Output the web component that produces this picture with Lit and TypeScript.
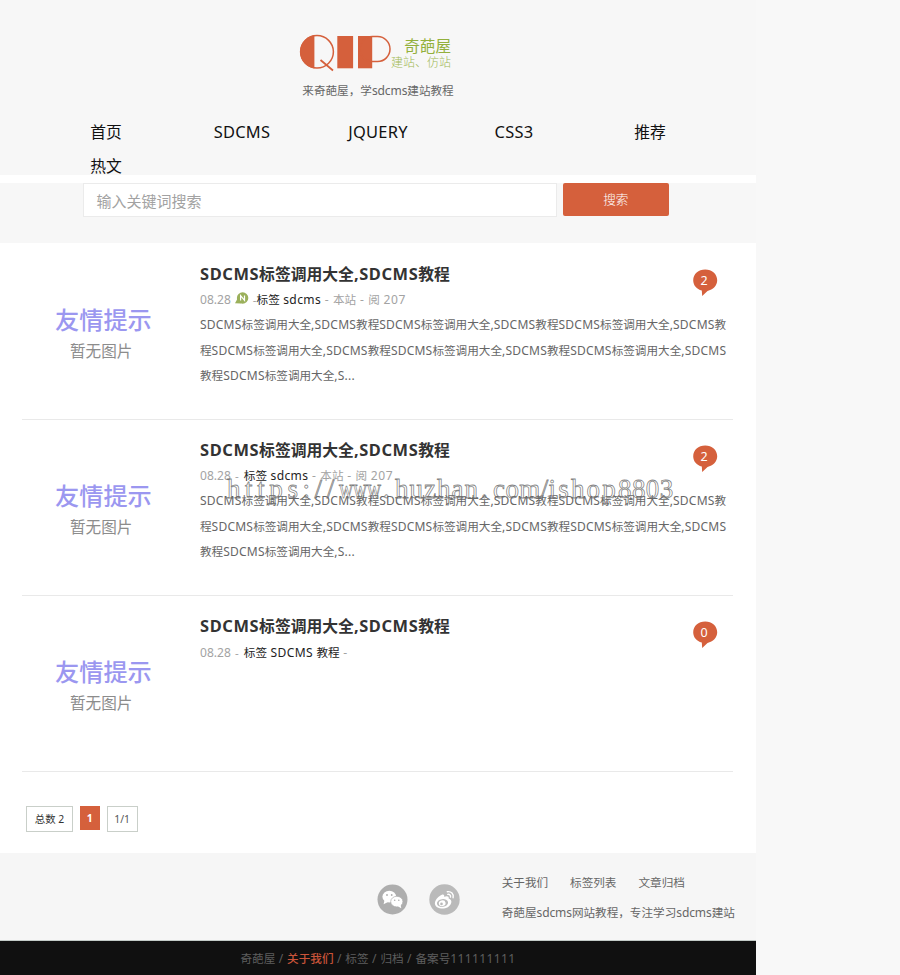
import { LitElement, html, css, svg } from "lit";
import { customElement } from "lit/decorators.js";

/** Wraps runs of Latin text so they can be tracked apart from the Han text. */
const mix = (text: string) =>
  text
    .split(/([\x20-\x7e]+)/)
    .filter((part) => part)
    .map((part) => (/^[\x20-\x7e]/.test(part) ? html`<span class="lat">${part}</span>` : part));

interface Article {
  fresh?: boolean;
  tag: string;
  tail: string;
  lines: string[];
  comments: number;
}

const EXCERPT = [
  "SDCMS标签调用大全,SDCMS教程SDCMS标签调用大全,SDCMS教程SDCMS标签调用大全,SDCMS教",
  "程SDCMS标签调用大全,SDCMS教程SDCMS标签调用大全,SDCMS教程SDCMS标签调用大全,SDCMS",
  "教程SDCMS标签调用大全,S...",
];

const ARTICLES: Article[] = [
  { fresh: true, tag: "标签 sdcms", tail: " - 本站 - 阅 207", lines: EXCERPT, comments: 2 },
  { tag: "标签 sdcms", tail: " - 本站 - 阅 207", lines: EXCERPT, comments: 2 },
  { tag: "标签 SDCMS 教程", tail: " -", lines: [], comments: 0 },
];

const NAV = ["首页", "SDCMS", "JQUERY", "CSS3", "推荐", "热文"];

@customElement("app-root")
export class AppRoot extends LitElement {
  static styles = css`
    :host {
      display: block;
      height: 975px;
      overflow: hidden;
      background: #f8f8f8;
      font-family: "Noto Sans", "Noto Sans CJK SC", sans-serif;
      font-size: 11.6px;
      color: #666;
    }
    * { box-sizing: border-box; }
    .lat { font-size: 1.04em; letter-spacing: 0.016em; white-space: pre; }
    .page { width: 756px; position: relative; background: #fff; }
    .header { height: 175px; background: #f7f7f7; padding-top: 32px; }
    .brand { display: flex; width: 153px; height: 42px; margin-left: 298px; }
    .brand svg { flex: none; }
    .brand-names {
      flex: 1; min-width: 0; display: flex; flex-direction: column; align-items: flex-end;
      white-space: nowrap; padding-top: 4px;
    }
    .name { font-size: 15.6px; line-height: 20px; color: #93b03c; }
    .trade { font-size: 12px; line-height: 13px; color: #9fb955; font-weight: 300; }
    .slogan { text-align: center; line-height: 20px; margin-top: 7px; font-size: 11.6px; white-space: nowrap; }
    .slogan .lat { letter-spacing: -0.01em; }
    .nav {
      display: grid; grid-template-columns: repeat(5, 136px); grid-auto-rows: 34px;
      margin: 14px 0 0 38px; text-align: center; line-height: 34px; font-size: 15.8px; color: #111;
    }
    .search { height: 60px; margin-top: 8px; background: #f7f7f7; padding-left: 83px; display: flex; gap: 6px; }
    .field {
      width: 473.5px; height: 34px; background: #fff; border: 1px solid #ebebeb;
      padding-left: 12.5px; line-height: 35px; font-size: 15px; color: #a2a2a2;
    }
    .go {
      width: 106.5px; height: 33px; border-radius: 2px; background: #d5603c;
      color: #fff; text-align: center; line-height: 33px; font-size: 12.6px; font-weight: 300;
    }
    .list { margin: 0 23px 0 22px; padding-top: 0.6px; }
    .item { height: 176.1px; border-bottom: 1px solid #e9e9e9; display: flex; }
    .thumb { width: 178px; padding: 58px 0 0 33px; white-space: nowrap; }
    .thumb-main { font-size: 24.2px; line-height: 36px; color: #9b97f0; font-weight: 500; }
    .thumb-sub { font-size: 15.6px; line-height: 26px; color: #8c8c8c; padding-left: 15px; }
    .body { flex: 1; padding-top: 18.3px; white-space: nowrap; min-width: 0; }
    .title { font-size: 15.8px; line-height: 24px; font-weight: 700; color: #333; }
    .title .lat { letter-spacing: 0.036em; }
    .meta { line-height: 26px; height: 26px; margin-top: 1.5px; color: #a3a3a3; display: flex; align-items: center; }
    .meta .lat { letter-spacing: 0.03em; }
    .meta .date .lat { letter-spacing: 0; }
    .meta .tail .lat { letter-spacing: 0.05em; }
    .tag { color: #222; }
    .fresh { width: 14px; height: 13px; margin: -4px 4px 0 4px; }
    .gap { white-space: pre; letter-spacing: 1.1px; }
    .lines { line-height: 25.7px; margin-top: -1.5px; }
    .bubble { width: 25px; height: 28px; margin: 25px 15.5px 0 -40.5px; position: relative; flex: none; }
    .bubble svg { display: block; }
    .count {
      position: absolute; left: 0; top: 0; width: 23px; line-height: 23px;
      color: #fff; font-size: 12.5px; text-align: center;
    }
    .pager { display: flex; padding: 34.5px 0 0 26px; height: 81.1px; gap: 6.6px; font-size: 10.4px; color: #333; }
    .box { height: 26px; line-height: 24px; border: 1px solid #c9cfc9; text-align: center; white-space: nowrap; }
    .total { width: 47px; }
    .ratio { width: 31px; color: #555; }
    .current { width: 20.5px; height: 24px; line-height: 24px; background: #d5603c; color: #fff; font-weight: 700; text-align: center; }
    .footer { height: 88px; background: #f6f6f6; border-bottom: 1px solid #c3cbc7; display: flex; padding-left: 377px; }
    .social { display: flex; gap: 21px; padding-top: 31px; width: 124.7px; }
    .links { display: flex; gap: 22px; line-height: 30px; padding-top: 15px; }
    .about { line-height: 30px; white-space: nowrap; }
    .about .lat { letter-spacing: -0.01em; }
    .legal { height: 35px; background: #101010; color: #5e5e5e; text-align: center; line-height: 36px; white-space: nowrap; }
    .legal .lat { letter-spacing: 0.03em; }
    .hot { color: #c9543a; font-weight: 500; }
    .mark {
      position: absolute; left: 227px; top: 472px; display: flex; white-space: nowrap;
      font: 27px/34px "Liberation Serif", serif; color: transparent;
      -webkit-text-stroke: 0.8px rgba(110, 110, 110, 0.85); pointer-events: none;
    }
    .m1 { letter-spacing: 4.6px; width: 112px; }
    .m2 { width: 42px; transform: scaleX(0.72); transform-origin: left; }
    .m3 { width: 14px; padding-left: 2px; }
    .m4 { width: 84px; letter-spacing: 1px; }
    .m5 { width: 55.5px; letter-spacing: 0.4px; }
    .m6 { width: 69.5px; letter-spacing: 2.2px; }
  `;

  private logo() {
    return html`<svg width="95" height="42" viewBox="298 32 95 42">
      ${svg`
        <clipPath id="half"><rect x="298" y="32" width="16.4" height="42"/></clipPath>
        <ellipse cx="317" cy="51.8" rx="17" ry="16.8" fill="#d5603c" clip-path="url(#half)"/>
        <ellipse cx="317" cy="51.8" rx="16.4" ry="16.2" fill="none" stroke="#d5603c" stroke-width="1.5"/>
        <line x1="320.5" y1="60" x2="333" y2="70.5" stroke="#d5603c" stroke-width="1.8"/>
        <rect x="337.3" y="36" width="15.8" height="32.3" fill="#d5603c"/>
        <rect x="358" y="36" width="14.2" height="32.3" fill="#d5603c"/>
        <rect x="360" y="36.6" width="30" height="24.9" rx="12.4" fill="none" stroke="#d5603c" stroke-width="1.5"/>
      `}
    </svg>`;
  }

  private freshIcon() {
    return html`<svg class="fresh" viewBox="0 0 14 13">
      <circle cx="7.6" cy="6" r="5.7" fill="#9bb05b" />
      <path d="M2.6 6.5 0 11.2 6 11.4z" fill="#9bb05b" />
      <path d="M5.6 8.6V3.6L9.5 8.4V3.4" fill="none" stroke="#fff" stroke-width="1.2" />
    </svg>`;
  }

  private wechat() {
    return html`<svg width="31" height="31" viewBox="0 0 31 31">
      <circle cx="15.5" cy="15.5" r="15" fill="#aeaeae" />
      <ellipse cx="12.3" cy="12.7" rx="6.9" ry="5.9" fill="#fff" />
      <path d="M7.5 16 6.6 20.2 11 18z" fill="#fff" />
      <ellipse cx="19.8" cy="17.6" rx="6.1" ry="5.3" fill="#fff" stroke="#aeaeae" stroke-width=".7" />
      <path d="M20.5 22 24.2 24.2 23.7 20.6z" fill="#fff" />
      <circle cx="10" cy="11" r=".9" fill="#aeaeae" /><circle cx="14.7" cy="11" r=".9" fill="#aeaeae" />
      <circle cx="17.7" cy="16.3" r=".8" fill="#aeaeae" /><circle cx="21.8" cy="16.3" r=".8" fill="#aeaeae" />
    </svg>`;
  }

  private weibo() {
    return html`<svg width="31" height="31" viewBox="0 0 31 31">
      <circle cx="15.5" cy="15.5" r="15.2" fill="#bababa" />
      <path d="M12.9 10.8c1.7-.6 2.7.2 2.2 2 2.6-1.2 5.2-.8 4.6 1.6 2.1.7 3.2 2.3 2.5 4.5-1.1 3.8-5.6 6-9.9 5.6-4.4-.4-7-3-6.3-6.2.6-2.9 4.2-6.5 6.9-7.5z" fill="#fff" />
      <ellipse cx="13.5" cy="19" rx="5.6" ry="3.9" transform="rotate(-8 13.5 19)" fill="#bababa" />
      <ellipse cx="13.2" cy="19.3" rx="3.4" ry="2.9" transform="rotate(-15 13.2 19.3)" fill="#fff" />
      <circle cx="12.5" cy="19.9" r="1.3" fill="#bababa" />
      <path d="M18.3 7.7c3.8-.7 6.7 2.2 5.8 6M18.8 10.4c1.8-.4 3.1 1 2.7 2.7" fill="none" stroke="#fff" stroke-width="1.4" stroke-linecap="round" />
    </svg>`;
  }

  private article(a: Article) {
    return html`<article class="item">
      <div class="thumb">
        <div class="thumb-main">友情提示</div>
        <div class="thumb-sub">暂无图片</div>
      </div>
      <div class="body">
        <div class="title">${mix("SDCMS标签调用大全,SDCMS教程")}</div>
        <div class="meta">
          <span class="date">${mix("08.28")}</span>${a.fresh
            ? html`${this.freshIcon()}<span>-</span>`
            : html`<span class="gap"> - </span>`}<span class="tag">${mix(a.tag)}</span><span class="tail">${mix(a.tail)}</span>
        </div>
        <div class="lines">${a.lines.map((l) => html`<div>${mix(l)}</div>`)}</div>
      </div>
      <div class="bubble">
        <svg width="25" height="28" viewBox="0 0 25 28">
          <path d="M12.2.5C19 .5 24.2 5 24.2 11.3c0 5.5-4.2 9.5-9.7 10.6L9.2 27 8.8 21.6C3.7 20.2.2 16.4.2 11.3.2 5 5.4.5 12.2.5z" fill="#d5603c" />
        </svg>
        <span class="count">${a.comments}</span>
      </div>
    </article>`;
  }

  render() {
    return html`<div class="page">
      <header class="header">
        <div class="brand">
          ${this.logo()}
          <div class="brand-names">
            <div class="name">奇葩屋</div>
            <div class="trade">建站、仿站</div>
          </div>
        </div>
        <div class="slogan">${mix("来奇葩屋，学sdcms建站教程")}</div>
        <nav class="nav">${NAV.map((n) => html`<span>${mix(n)}</span>`)}</nav>
      </header>
      <div class="search">
        <div class="field">输入关键词搜索</div>
        <div class="go">搜索</div>
      </div>
      <main class="list">${ARTICLES.map((a) => this.article(a))}</main>
      <div class="pager">
        <span class="box total">总数 2</span><span class="current">1</span><span class="box ratio">1/1</span>
      </div>
      <footer class="footer">
        <div class="social">${this.wechat()}${this.weibo()}</div>
        <div>
          <div class="links"><span>关于我们</span><span>标签列表</span><span>文章归档</span></div>
          <div class="about">${mix("奇葩屋sdcms网站教程，专注学习sdcms建站")}</div>
        </div>
      </footer>
      <div class="legal">奇葩屋${mix(" / ")}<span class="hot">关于我们</span>${mix(" / 标签 / 归档 / 备案号111111111")}</div>
      <div class="mark"><span class="m1">https://</span><span class="m2">www</span><span class="m3">.</span><span class="m4">huzhan</span><span class="m3">.</span><span class="m5">com/</span><span class="m6">ishop</span><span class="m5">8803</span></div>
    </div>`;
  }
}
